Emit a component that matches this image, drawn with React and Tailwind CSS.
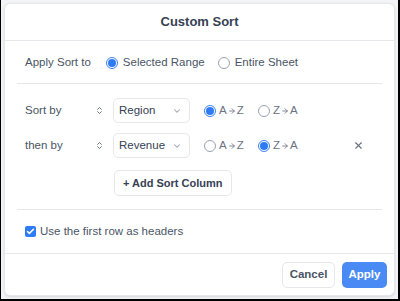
import React from 'react';
import { ChevronDown, ChevronsUpDown, X, Check, ArrowRight } from 'lucide-react';

const Radio = ({ checked, label, gap = 'gap-[5px]' }) => (
  <label className={`flex items-center ${gap} text-[11.5px] text-gray-500 whitespace-nowrap shrink-0`}>
    <span
      className={
        checked
          ? 'w-[12px] h-[12px] shrink-0 rounded-full border border-[#3b82f6] flex items-center justify-center'
          : 'w-[12px] h-[12px] shrink-0 rounded-full border border-gray-400'
      }
    >
      {checked && <span className="w-[8px] h-[8px] rounded-full bg-[#2f7bf5]" />}
    </span>
    <span>{label}</span>
  </label>
);

const Dir = ({ from, to }) => (
  <span className="flex items-center gap-[1px] w-[22px]">
    {from}
    <ArrowRight className="w-[8px] h-[8px] shrink-0" strokeWidth={2.5} />
    {to}
  </span>
);

const SortSelect = ({ value }) => (
  <div className="w-[77px] h-[25px] shrink-0 border border-gray-200 rounded-[5px] flex items-center justify-between pl-[5px] pr-[7px] text-[11.5px] text-gray-700 bg-white">
    <span>{value}</span>
    <ChevronDown className="w-[10px] h-[10px] text-gray-400" strokeWidth={2.5} />
  </div>
);

const SortRow = ({ label, value, dir, removable }) => (
  <div className="flex items-center h-[25px]">
    <span className="w-[70px] shrink-0 text-[11.5px] text-gray-600">{label}</span>
    <ChevronsUpDown className="w-[9px] h-[9px] shrink-0 text-gray-500 mr-[9px]" strokeWidth={2.5} />
    <SortSelect value={value} />
    <div className="flex items-center gap-[17px] ml-[14px]">
      <Radio gap="gap-[3px]" checked={dir === 'az'} label={<Dir from="A" to="Z" />} />
      <Radio gap="gap-[3px]" checked={dir === 'za'} label={<Dir from="Z" to="A" />} />
    </div>
    {removable && <X className="w-[11px] h-[11px] shrink-0 text-gray-500 ml-[58px]" strokeWidth={2.5} />}
  </div>
);

export default function App() {
  return (
    <div
      className="w-[400px] h-[301px] bg-gray-100 border-l border-r-2 border-b-2 border-black p-[3px]"
      style={{ fontFamily: '"Liberation Sans", Arial, sans-serif' }}
    >
      <div className="w-full h-full bg-white rounded-[6px] border border-gray-200 shadow-sm flex flex-col">
        <div className="h-[37px] border-b border-gray-200 flex items-center justify-center text-[13px] font-bold text-gray-700">
          Custom Sort
        </div>

        <div className="mx-3 h-[43px] flex items-center px-2 pt-[2px] border-b border-gray-200">
          <span className="text-[11.5px] text-gray-600 mr-[15px]">Apply Sort to</span>
          <div className="flex items-center gap-[13px]">
            <Radio checked label={<span className="text-gray-600">Selected Range</span>} />
            <Radio label={<span className="text-gray-600">Entire Sheet</span>} />
          </div>
        </div>

        <div className="mx-3 px-2 pt-[14px] pb-[13px] border-b border-gray-200 flex flex-col gap-[10px]">
          <SortRow label="Sort by" value="Region" dir="az" />
          <SortRow label="then by" value="Revenue" dir="za" removable />
          <div className="pl-[89px] pt-[2px]">
            <button className="h-[26px] px-[8px] border border-gray-200 rounded-[5px] text-[11px] font-bold text-gray-700 bg-white">
              + Add Sort Column
            </button>
          </div>
        </div>

        <div className="mx-3 px-2 h-[43px] flex items-center">
          <span className="w-[11px] h-[11px] rounded-[2px] bg-[#2f7bf5] flex items-center justify-center mr-[4px]">
            <Check className="w-[9px] h-[9px] text-white" strokeWidth={4} />
          </span>
          <span className="text-[11.5px] text-gray-600">Use the first row as headers</span>
        </div>

        <div className="flex-1 border-t border-gray-200 flex items-center justify-end gap-[7px] px-[7px]">
          <button className="h-[26px] w-[53px] border border-gray-200 rounded-[5px] text-[11.5px] font-bold text-gray-600 bg-white">
            Cancel
          </button>
          <button className="h-[26px] w-[45px] rounded-[5px] text-[11.5px] font-bold text-white bg-[#4a8af4]">
            Apply
          </button>
        </div>
      </div>
    </div>
  );
}
